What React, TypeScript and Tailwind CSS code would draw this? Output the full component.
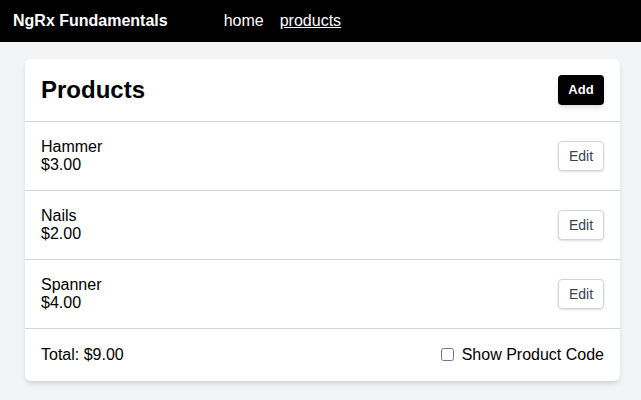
import React from "react";

const products = [
  { name: "Hammer", price: "$3.00" },
  { name: "Nails", price: "$2.00" },
  { name: "Spanner", price: "$4.00" },
];

export default function App() {
  return (
    <div className="min-h-[400px] bg-[#f3f4f6]" style={{ fontFamily: '"Liberation Sans", Arial, sans-serif' }}>
      <nav className="flex h-[42px] items-center bg-black text-white">
        <span className="ml-[13px] text-[16px] leading-[1.15] font-bold">NgRx Fundamentals</span>
        <a className="ml-[56px] text-[16px] leading-[1.15]">home</a>
        <a className="ml-[16px] text-[16px] leading-[1.15] underline">products</a>
      </nav>
      <div className="ml-[25px] mt-[17px] w-[595px] rounded-md bg-white shadow-md">
        <div className="flex h-[63px] items-center justify-between border-b border-[#d1d5db] px-4">
          <h1 className="text-[24px] leading-[1.15] font-bold text-black">Products</h1>
          <button className="flex h-[30px] w-[46px] items-center justify-center rounded bg-black text-[13px] leading-[1.15] font-bold text-white shadow-md">Add</button>
        </div>
        {products.map((p) => (
          <div key={p.name} className="flex h-[69px] items-center justify-between border-b border-[#d1d5db] px-4">
            <div className="text-[16px] leading-[1.15] text-black">
              <div>{p.name}</div>
              <div>{p.price}</div>
            </div>
            <button className="flex h-[30px] w-[46px] items-center justify-center rounded border border-[#d1d5db] bg-white text-[14px] leading-[1.15] text-[#374151] shadow-sm">Edit</button>
          </div>
        ))}
        <div className="flex h-[52px] items-center justify-between px-4 text-[16px] leading-[1.15] text-black">
          <span>Total: $9.00</span>
          <label className="flex items-center gap-[8px]">
            <input type="checkbox" className="h-[13px] w-[13px]" />
            <span>Show Product Code</span>
          </label>
        </div>
      </div>
    </div>
  );
}
